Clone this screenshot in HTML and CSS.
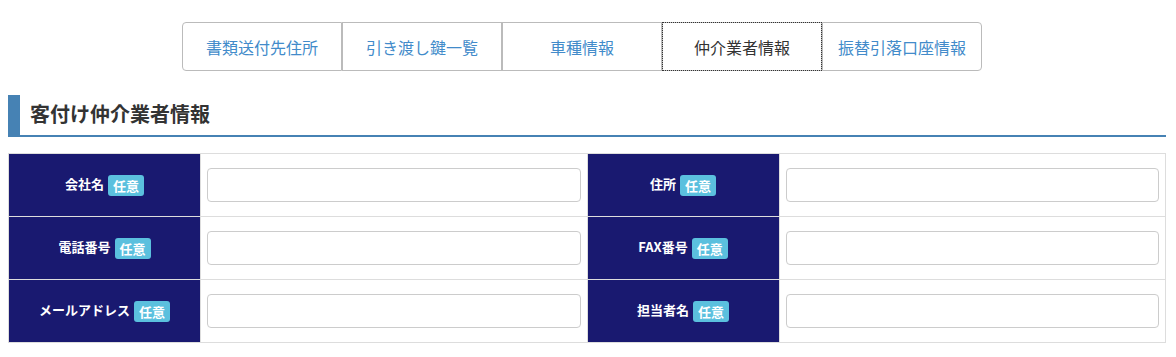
FILE: index.html
```html
<!DOCTYPE html>
<html lang="ja">
<head>
    <meta charset="UTF-8">
    <title>客付け仲介業者情報</title>
    <link rel="stylesheet" href="styles.css">
</head>
<body>
    <div class="tabs">
        <a class="tab">書類送付先住所</a>
        <a class="tab">引き渡し鍵一覧</a>
        <a class="tab">車種情報</a>
        <a class="tab active">仲介業者情報</a>
        <a class="tab">振替引落口座情報</a>
    </div>

    <h2 class="section-title">客付け仲介業者情報</h2>

    <table class="form-table">
        <tr>
            <th>会社名<span class="badge">任意</span></th>
            <td><input type="text"></td>
            <th>住所<span class="badge">任意</span></th>
            <td><input type="text"></td>
        </tr>
        <tr>
            <th>電話番号<span class="badge">任意</span></th>
            <td><input type="text"></td>
            <th>FAX番号<span class="badge">任意</span></th>
            <td><input type="text"></td>
        </tr>
        <tr>
            <th>メールアドレス<span class="badge">任意</span></th>
            <td><input type="text"></td>
            <th>担当者名<span class="badge">任意</span></th>
            <td><input type="text"></td>
        </tr>
    </table>
</body>
</html>
```

FILE: styles.css
```css
* {
    box-sizing: border-box;
}

body {
    margin: 0;
    padding: 22px 10px 0 8px;
    font-family: "Noto Sans CJK JP", "Liberation Sans", sans-serif;
    color: #333;
    background: #fff;
}

.tabs {
    display: flex;
    margin-left: 174px;
}

.tab {
    width: 160px;
    height: 49px;
    display: flex;
    align-items: center;
    justify-content: center;
    border: 1px solid #bbb;
    color: #428bca;
    font-size: 16px;
    background: #fff;
}

.tab:first-child {
    border-radius: 4px 0 0 4px;
}

.tab:last-child {
    border-radius: 0 4px 4px 0;
}

.tab.active {
    color: #333;
    outline: 1px dotted #333;
    outline-offset: -1px;
}

.section-title {
    margin: 24px 0 16px;
    padding: 4px 0 6px 10px;
    font-size: 20px;
    font-weight: bold;
    line-height: 30px;
    border-left: 12px solid #4682b4;
    border-bottom: 2px solid #4682b4;
}

.form-table {
    width: 100%;
    border-collapse: collapse;
}

.form-table th,
.form-table td {
    border: 1px solid #ddd;
    height: 63px;
}

.form-table th {
    width: 192px;
    background: #191970;
    color: #fff;
    font-size: 13px;
    font-weight: bold;
    text-align: center;
}

.form-table td {
    padding: 0 6px;
}

.badge {
    display: inline-block;
    background: #5bc0de;
    color: #fff;
    font-size: 13px;
    font-weight: bold;
    padding: 2px 5px;
    border-radius: 3px;
    line-height: 17px;
    margin-left: 4px;
    vertical-align: middle;
}

.form-table input {
    width: 100%;
    height: 34px;
    border: 1px solid #ccc;
    border-radius: 4px;
    display: block;
}
```
